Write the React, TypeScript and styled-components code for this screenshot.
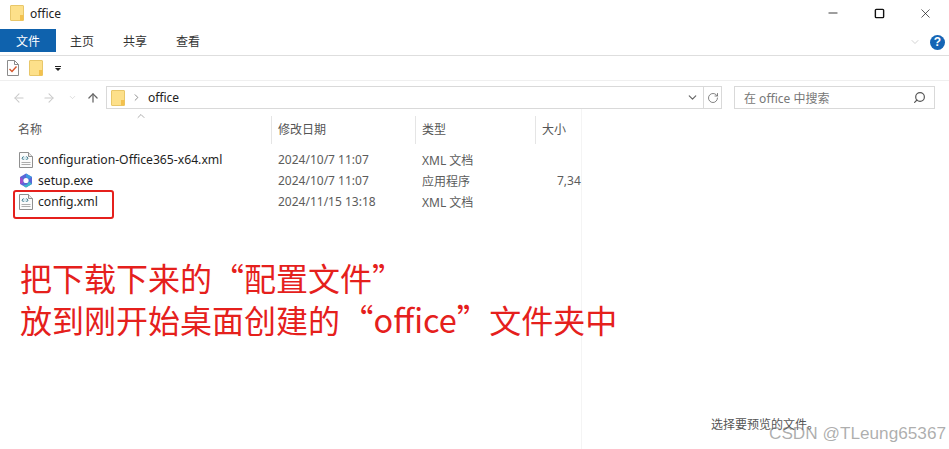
import styled, { createGlobalStyle } from 'styled-components';
import { ArrowLeft, ArrowRight, ArrowUp, ChevronDown, ChevronRight, ChevronUp, Minus, RotateCw, Search, Square, X } from 'lucide-react';

const GlobalStyle = createGlobalStyle`
  html, body {
    margin: 0;
    padding: 0;
    background: #fff;
  }
  body {
    font-family: "Noto Sans", "Noto Sans CJK SC", sans-serif;
    font-size: 12px;
    color: #1e1e1e;
  }
`;

const Explorer = styled.div`
  width: 949px;
  height: 449px;
  overflow: hidden;
  position: relative;
  display: flex;
  flex-direction: column;
  background: #fff;
`;

const TitleBar = styled.div`
  height: 29px;
  box-sizing: border-box;
  padding: 0 1px 3px 10px;
  display: flex;
  align-items: center;
  gap: 6px;
  font-size: 12px;
  color: #222;
`;

const WindowButtons = styled.div`
  margin-left: auto;
  display: flex;
  align-items: center;
`;

const WindowButton = styled.div`
  width: 46px;
  height: 26px;
  display: flex;
  align-items: center;
  justify-content: center;
  color: #111;
`;

const TabRow = styled.div`
  height: 27px;
  box-sizing: border-box;
  display: flex;
  align-items: flex-start;
  border-bottom: 1px solid #dedede;
`;

const FileTab = styled.div`
  width: 56px;
  height: 23px;
  background: #0f62ad;
  color: #fff;
  display: flex;
  align-items: center;
  justify-content: center;
`;

const Tab = styled.div`
  height: 23px;
  width: 39px;
  padding-left: 14px;
  display: flex;
  align-items: center;
  color: #333;
`;

const HelpArea = styled.div`
  margin-left: auto;
  height: 26px;
  padding-right: 4px;
  display: flex;
  align-items: center;
  gap: 9px;
  color: #b5b5b5;
`;

const HelpBadge = styled.div`
  width: 15px;
  height: 15px;
  border-radius: 50%;
  background: #1565b5;
  color: #fff;
  font: bold 12px "Liberation Sans", sans-serif;
  display: flex;
  align-items: center;
  justify-content: center;
`;

const QuickBar = styled.div`
  height: 25px;
  box-sizing: border-box;
  padding-left: 7px;
  display: flex;
  align-items: center;
  gap: 10px;
  border-bottom: 1px solid #efefef;
`;

const Caret = styled.div`
  width: 6px;
  margin-left: 2px;
  border-top: 1px solid #222;
  padding-top: 1px;
  &::after {
    content: '';
    display: block;
    border-left: 3px solid transparent;
    border-right: 3px solid transparent;
    border-top: 3px solid #222;
  }
`;

const AddressRow = styled.div`
  height: 23px;
  margin-top: 5px;
  display: flex;
  align-items: center;
`;

const NavButtons = styled.div`
  width: 106px;
  padding-left: 12px;
  box-sizing: border-box;
  display: flex;
  align-items: center;
  gap: 16px;
  color: #c9c9c9;
`;

const NavChevron = styled(ChevronDown)`
  margin: 0 -7px 0 -4px;
`;

const AddressBox = styled.div`
  width: 616px;
  height: 23px;
  box-sizing: border-box;
  border: 1px solid #d9d9d9;
  display: flex;
  align-items: center;
  padding-left: 4px;
  gap: 6px;
  font-size: 12px;
  color: #222;
`;

const CrumbChevron = styled(ChevronRight)`
  color: #666;
`;

const AddressTools = styled.div`
  margin-left: auto;
  height: 100%;
  display: flex;
  align-items: center;
  color: #666;
`;

const RefreshCell = styled.div`
  height: 100%;
  width: 17px;
  margin-left: 4px;
  border-left: 1px solid #d9d9d9;
  display: flex;
  align-items: center;
  justify-content: center;
`;

const SearchBox = styled.div`
  width: 201px;
  height: 23px;
  margin-left: 12px;
  box-sizing: border-box;
  border: 1px solid #d9d9d9;
  display: flex;
  align-items: center;
  justify-content: space-between;
  padding: 0 8px 0 9px;
  color: #777;
`;

const MirroredSearch = styled(Search)`
  transform: scaleX(-1);
  color: #555;
`;

const Body = styled.div`
  flex: 1;
  display: flex;
`;

const ListPane = styled.div`
  width: 581px;
  border-right: 1px solid #f4f4f4;
  padding-top: 7px;
`;

const ColumnHeader = styled.div`
  height: 28px;
  display: grid;
  grid-template-columns: 272px 144px 120px 45px;
  position: relative;
`;

const HeaderCell = styled.div<{ $last?: boolean }>`
  display: flex;
  align-items: center;
  padding: 0 0 2px 18px;
  color: #555;
  border-right: ${p => (p.$last ? 'none' : '1px solid #e5e5e5')};
  & + & {
    padding-left: 6px;
  }
`;

const SortMark = styled(ChevronUp)`
  position: absolute;
  left: 135px;
  top: -6px;
  color: #777;
`;

const Rows = styled.div`
  margin-top: 5px;
`;

const Row = styled.div<{ $marked?: boolean }>`
  height: 21px;
  display: grid;
  grid-template-columns: 272px 144px 120px 45px;
  align-items: center;
  position: relative;
  color: #5c5c5c;

  ${p =>
    p.$marked &&
    `&::after {
      content: '';
      position: absolute;
      left: 13px;
      top: -1px;
      width: 97px;
      height: 25px;
      border: 2px solid #e5201c;
      border-radius: 3px;
    }`}
`;

const NameCell = styled.div`
  display: flex;
  align-items: center;
  gap: 5px;
  padding-left: 19px;
  color: #1e1e1e;
  font-size: 12.2px;
`;

const Cell = styled.div`
  padding-left: 6px;
  white-space: nowrap;
`;

const SizeCell = styled.div`
  padding-left: 21px;
  white-space: nowrap;
`;

const Annotation = styled.div`
  margin: 44px 0 0 20px;
  width: 640px;
  color: #e5201c;
  font-family: "Noto Sans CJK SC", sans-serif;
  font-size: 32px;
  line-height: 42px;
  font-weight: 400;
  white-space: nowrap;
`;

const QuotedWord = styled.span`
  margin-left: 1px;
  font-size: 32.5px;
`;

const PreviewPane = styled.div`
  flex: 1;
  display: flex;
  align-items: flex-end;
  padding: 0 0 16px 129px;
  color: #555;
  white-space: nowrap;
`;

const Watermark = styled.div`
  position: absolute;
  right: 3px;
  bottom: 5px;
  font: 17.2px "Liberation Sans", sans-serif;
  color: rgba(120, 120, 120, 0.6);
`;

const FolderIcon = () => (
  <svg width="14" height="16" viewBox="0 0 14 16">
    <rect x="0.5" y="0.5" width="13" height="15" rx="0.5" fill="#fde08a" stroke="#e8c76a" />
    <path d="M10 15.5V10h3.5v5.5z" fill="#f3c14e" />
  </svg>
);

const XmlIcon = () => (
  <svg width="14" height="16" viewBox="0 0 14 16">
    <path d="M.5.5h9l4 4v11H.5z" fill="#fbfbfb" stroke="#8f8f8f" />
    <path d="M9.500.5v4h4" fill="#e8e8e8" stroke="#8f8f8f" />
    <path d="M2.500 10.500h9M2.500 12.500h9" stroke="#adadad" />
    <path d="M3 4.500h6v3.500H3z" fill="#d5e8ee" />
    <path d="M4.500 4.500L3 6.200l1.500 1.700M7.500 4.500L9 6.200 7.500 7.900" fill="none" stroke="#3f7485" />
  </svg>
);

const SetupIcon = () => (
  <svg width="14" height="15" viewBox="0 0 14 15">
    <path d="M7 .5l6 3.500v7l-6 3.500L1 11V4z" fill="#5a68d8" />
    <path d="M7 .5l6 3.500-3 2-3-1.600z" fill="#3f9be0" />
    <path d="M1 11V4l3 2v4z" fill="#a050c8" />
    <path d="M13 11l-6 3.500-3-2 4-1 2-3z" fill="#3fb8c8" />
    <circle cx="7" cy="7.500" r="2.600" fill="#fff" />
  </svg>
);

const ChecklistIcon = () => (
  <svg width="12" height="16" viewBox="0 0 12 16">
    <path d="M.5.5h7l4 4v11H.5z" fill="#fff" stroke="#8c8c8c" />
    <path d="M7.500.5v4h4" fill="none" stroke="#8c8c8c" />
    <path d="M2.500 9l2.500 2.500L9.500 6.500" fill="none" stroke="#d6552b" strokeWidth="1.400" />
  </svg>
);

const files = [
  { name: 'configuration-Office365-x64.xml', date: '2024/10/7 11:07', type: 'XML 文档', size: '', icon: <XmlIcon /> },
  { name: 'setup.exe', date: '2024/10/7 11:07', type: '应用程序', size: '7,34', icon: <SetupIcon /> },
  { name: 'config.xml', date: '2024/11/15 13:18', type: 'XML 文档', size: '', icon: <XmlIcon />, marked: true },
];

export default function App() {
  return (
    <>
      <GlobalStyle />
      <Explorer>
        <TitleBar>
          <FolderIcon />
          <span>office</span>
          <WindowButtons>
            <WindowButton><Minus size={14} strokeWidth={1.4} /></WindowButton>
            <WindowButton><Square size={11} strokeWidth={1.4} absoluteStrokeWidth /></WindowButton>
            <WindowButton><X size={15} strokeWidth={1.1} /></WindowButton>
          </WindowButtons>
        </TitleBar>
        <TabRow>
          <FileTab>文件</FileTab>
          <Tab>主页</Tab>
          <Tab>共享</Tab>
          <Tab>查看</Tab>
          <HelpArea>
            <ChevronDown size={12} strokeWidth={1.2} />
            <HelpBadge>?</HelpBadge>
          </HelpArea>
        </TabRow>
        <QuickBar>
          <ChecklistIcon />
          <FolderIcon />
          <Caret />
        </QuickBar>
        <AddressRow>
          <NavButtons>
            <ArrowLeft size={14} strokeWidth={1.8} />
            <ArrowRight size={14} strokeWidth={1.8} />
            <NavChevron size={9} strokeWidth={1.6} />
            <ArrowUp size={14} strokeWidth={2.2} color="#666" />
          </NavButtons>
          <AddressBox>
            <FolderIcon />
            <CrumbChevron size={11} strokeWidth={1.6} />
            <span>office</span>
            <AddressTools>
              <ChevronDown size={13} strokeWidth={2.2} />
              <RefreshCell><RotateCw size={12} strokeWidth={1.6} /></RefreshCell>
            </AddressTools>
          </AddressBox>
          <SearchBox>
            <span>在 office 中搜索</span>
            <MirroredSearch size={13} strokeWidth={2.2} />
          </SearchBox>
        </AddressRow>
        <Body>
          <ListPane>
            <ColumnHeader>
              <SortMark size={12} strokeWidth={1.2} />
              <HeaderCell>名称</HeaderCell>
              <HeaderCell>修改日期</HeaderCell>
              <HeaderCell>类型</HeaderCell>
              <HeaderCell $last>大小</HeaderCell>
            </ColumnHeader>
            <Rows>
              {files.map(file => (
                <Row key={file.name} $marked={file.marked}>
                  <NameCell>
                    {file.icon}
                    <span>{file.name}</span>
                  </NameCell>
                  <Cell>{file.date}</Cell>
                  <Cell>{file.type}</Cell>
                  <SizeCell>{file.size}</SizeCell>
                </Row>
              ))}
            </Rows>
            <Annotation>
              把下载下来的“配置文件”
              <br />
              放到刚开始桌面创建的<QuotedWord>“office”</QuotedWord>文件夹中
            </Annotation>
          </ListPane>
          <PreviewPane>选择要预览的文件。</PreviewPane>
        </Body>
        <Watermark>CSDN @TLeung65367</Watermark>
      </Explorer>
    </>
  );
}
